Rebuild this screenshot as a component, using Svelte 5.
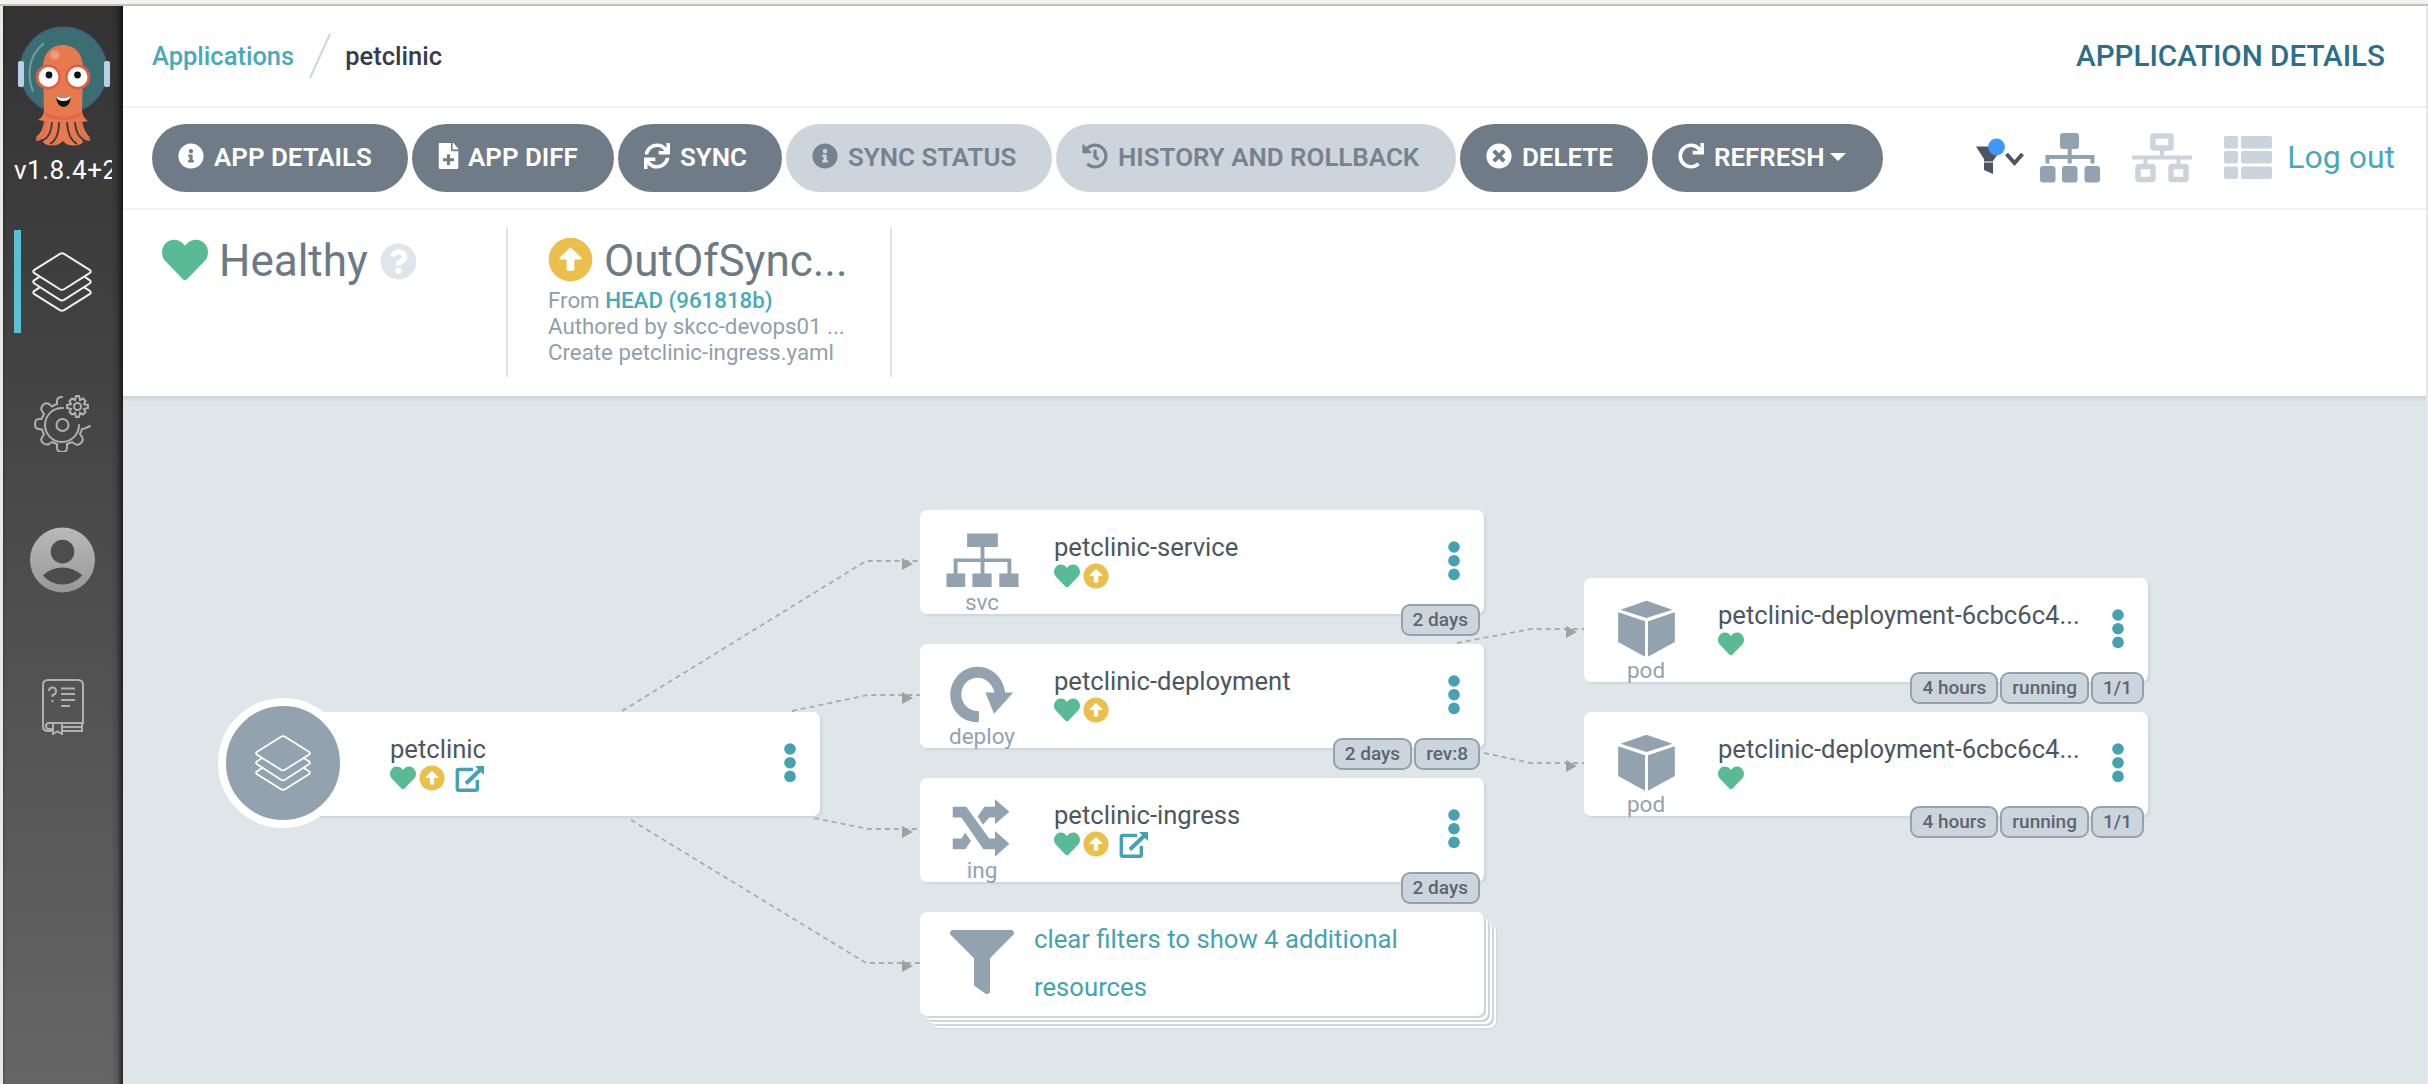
<script>
  const icons = {
    heart: 'M462.3 62.6C407.5 15.9 326 24.3 275.7 76.2L256 96.5l-19.7-20.3C186.1 24.3 104.5 15.9 49.7 62.6c-62.8 53.6-66.1 149.8-9.9 207.9l193.5 199.8c12.5 12.9 32.8 12.9 45.3 0l193.5-199.8c56.3-58.1 53-154.3-9.8-207.9z',
    up: 'M8 256C8 119 119 8 256 8s248 111 248 248-111 248-248 248S8 393 8 256zm292 116V256h70.9c10.7 0 16.1-13 8.5-20.5L264.5 121.2c-4.7-4.7-12.2-4.7-16.9 0l-115 114.3c-7.6 7.6-2.2 20.5 8.5 20.5H212v116c0 6.6 5.4 12 12 12h64c6.6 0 12-5.4 12-12z',
    info: 'M256 8C119.043 8 8 119.083 8 256c0 136.997 111.043 248 248 248s248-111.003 248-248C504 119.083 392.957 8 256 8zm0 110c23.196 0 42 18.804 42 42s-18.804 42-42 42-42-18.804-42-42 18.804-42 42-42zm56 254c0 6.627-5.373 12-12 12h-88c-6.627 0-12-5.373-12-12v-24c0-6.627 5.373-12 12-12h12v-64h-12c-6.627 0-12-5.373-12-12v-24c0-6.627 5.373-12 12-12h64c6.627 0 12 5.373 12 12v100h12c6.627 0 12 5.373 12 12v24z',
    file: 'M240 136V0H24C10.7 0 0 10.7 0 24v464c0 13.300 10.700 24 24 24h336c13.300 0 24-10.700 24-24V160H264c-13.200 0-24-10.800-24-24zm60 172v40c0 6-5 10-10 10h-68v68c0 6-5 10-10 10h-40c-6 0-10-5-10-10v-68H94c-6 0-10-5-10-10v-40c0-6 5-10 10-10h68v-68c0-6 5-10 10-10h40c6 0 10 5 10 10v68h68c6 0 10 5 10 10zM384 122v6H272V0h6c6 0 12 3 17 7l82 98c4 4 7 10 7 17z',
    sync: 'M440.65 12.57l4 82.77A247.16 247.16 0 0 0 255.83 8C134.73 8 33.91 94.92 12.29 209.82A12 12 0 0 0 24.09 224h49.05a12 12 0 0 0 11.67-9.26 175.91 175.91 0 0 1 317-56.94l-101.46-4.86a12 12 0 0 0-12.57 12v47.41a12 12 0 0 0 12 12H500a12 12 0 0 0 12-12V12a12 12 0 0 0-12-12h-47.37a12 12 0 0 0-11.98 12.57zM255.83 432a175.61 175.61 0 0 1-146-77.8l101.8 4.87a12 12 0 0 0 12.57-12v-47.4a12 12 0 0 0-12-12H12a12 12 0 0 0-12 12V500a12 12 0 0 0 12 12h47.35a12 12 0 0 0 12-12.6l-4.15-82.57A247.17 247.17 0 0 0 255.83 504c121.11 0 221.93-86.92 243.55-201.82a12 12 0 0 0-11.8-14.18h-49.05a12 12 0 0 0-11.67 9.26A175.86 175.86 0 0 1 255.83 432z',
    history: 'M504 255.531c.253 136.64-111.18 248.372-247.82 248.468-59.015.042-113.223-20.53-155.822-54.911-11.077-8.94-11.905-25.541-1.839-35.607l11.267-11.267c8.609-8.609 22.353-9.551 31.891-1.984C173.062 425.135 212.781 440 256 440c101.705 0 184-82.311 184-184 0-101.705-82.311-184-184-184-48.814 0-93.149 18.969-126.068 49.932l50.754 50.754c10.08 10.08 2.941 27.314-11.313 27.314H24c-8.837 0-16-7.163-16-16V38.627c0-14.254 17.234-21.393 27.314-11.314l49.372 49.372C129.209 34.136 189.552 8 256 8c136.81 0 247.747 110.78 248 247.531zm-180.912 78.784l9.823-12.63c8.138-10.463 6.253-25.542-4.21-33.679L288 256.349V152c0-13.255-10.745-24-24-24h-16c-13.255 0-24 10.745-24 24v135.651l65.409 50.874c10.463 8.137 25.541 6.253 33.679-4.21z',
    times: 'M256 8C119 8 8 119 8 256s111 248 248 248 248-111 248-248S393 8 256 8zm121.6 313.1c4.7 4.7 4.7 12.3 0 17L338 377.6c-4.7 4.7-12.3 4.7-17 0L256 312l-65.1 65.6c-4.7 4.7-12.3 4.7-17 0L134.4 338c-4.7-4.7-4.7-12.3 0-17l65.6-65-65.6-65.1c-4.7-4.7-4.7-12.3 0-17l39.6-39.6c4.7-4.7 12.3-4.7 17 0l65 65.7 65.1-65.6c4.7-4.7 12.3-4.7 17 0l39.6 39.6c4.7 4.7 4.7 12.3 0 17L312 256l65.6 65.1z',
    redo: 'M500.33 0h-47.41a12 12 0 0 0-12 12.57l4 82.76A247.42 247.42 0 0 0 256 8C119.34 8 7.9 119.53 8 256.19 8.1 393.07 119.1 504 256 504a247.1 247.1 0 0 0 166.18-63.91 12 12 0 0 0 .48-17.43l-34-34a12 12 0 0 0-16.38-.55A176 176 0 1 1 402.1 157.8l-101.53-4.87a12 12 0 0 0-12.57 12v47.41a12 12 0 0 0 12 12h200.33a12 12 0 0 0 12-12V12a12 12 0 0 0-12-12z',
    question: 'M504 256c0 136.997-111.043 248-248 248S8 392.997 8 256C8 119.083 119.043 8 256 8s248 111.083 248 248zM262.655 90c-54.497 0-89.255 22.957-116.549 63.758-3.536 5.286-2.353 12.415 2.715 16.258l34.699 26.31c5.205 3.947 12.621 3.008 16.665-2.122 17.864-22.658 30.113-35.797 57.303-35.797 20.429 0 45.698 13.148 45.698 32.958 0 14.976-12.363 22.667-32.534 33.976C247.128 238.528 216 254.941 216 296v4c0 6.627 5.373 12 12 12h56c6.627 0 12-5.373 12-12v-1.333c0-28.462 83.186-29.647 83.186-106.667 0-58.002-60.165-102-116.531-102zM256 338c-25.365 0-46 20.635-46 46 0 25.364 20.635 46 46 46s46-20.636 46-46c0-25.364-20.635-46-46-46z',
    filter: 'M487.976 0H24.028C2.71 0-8.047 25.866 7.058 40.971L192 225.941V432c0 7.831 3.821 15.17 10.237 19.662l80 55.98C298.02 518.69 320 507.493 320 487.98V225.941l184.947-184.97C520.021 25.896 509.338 0 487.976 0z'
  };

  const actions = [
    { id: 'details', icon: 'info', label: 'APP DETAILS' },
    { id: 'diff', icon: 'file', label: 'APP DIFF' },
    { id: 'sync', icon: 'sync', label: 'SYNC' },
    { id: 'status', icon: 'info', label: 'SYNC STATUS', off: true },
    { id: 'history', icon: 'history', label: 'HISTORY AND ROLLBACK', off: true },
    { id: 'delete', icon: 'times', label: 'DELETE' },
    { id: 'refresh', icon: 'redo', label: 'REFRESH', caret: true }
  ];

  const nodes = [
    { x: 920, y: 510, kind: 'svc', name: 'petclinic-service', sync: true, tags: ['2 days'] },
    { x: 920, y: 644, kind: 'deploy', name: 'petclinic-deployment', sync: true, tags: ['2 days', 'rev:8'] },
    { x: 920, y: 778, kind: 'ing', name: 'petclinic-ingress', sync: true, link: true, tags: ['2 days'] },
    { x: 1584, y: 578, kind: 'pod', name: 'petclinic-deployment-6cbc6c4...', tags: ['4 hours', 'running', '1/1'] },
    { x: 1584, y: 712, kind: 'pod', name: 'petclinic-deployment-6cbc6c4...', tags: ['4 hours', 'running', '1/1'] }
  ];

  const edges = [
    'M622 711 L866 561 H920',
    'M792 711 L868 695 H920',
    'M814 818 L868 829 H920',
    'M631 820 L866 963 H920',
    'M1457 643 L1531 629 H1584',
    'M1484 753 L1531 763 H1584'
  ];
  const arrows = [[902, 564], [902, 698], [902, 832], [902, 966], [1566, 632], [1566, 766]];
</script>

{#snippet glyph(name, cls, box = '0 0 512 512')}
  <svg class={cls} viewBox={box} aria-hidden="true"><path d={icons[name]} fill="currentColor" /></svg>
{/snippet}

{#snippet layers(cls)}
  <svg class={cls} viewBox="0 0 64 64" fill="none" stroke="currentColor" stroke-width="2" stroke-linejoin="round" aria-hidden="true">
    <path d="M29.800 3 3.500 19.500q-2.500 1.700 0 3.400L29.800 39.500q2.200 1.200 4.400 0L60.500 22.900q2.500-1.700 0-3.400L34.200 3q-2.200-1.200-4.400 0z" />
    <path d="M9 26.500l-5.500 3.600q-2.500 1.700 0 3.400L29.800 50.500q2.200 1.200 4.400 0L60.500 33.500q2.500-1.700 0-3.400L55 26.500" />
    <path d="M9 37.500l-5.500 3.600q-2.500 1.700 0 3.400L29.800 61q2.200 1.200 4.400 0L60.500 44.500q2.500-1.700 0-3.400L55 37.500" />
  </svg>
{/snippet}

{#snippet external()}
  <svg class="ext" viewBox="0 0 30 28" fill="none" stroke="currentColor" aria-hidden="true">
    <path d="M18 4.500H3.800a1.500 1.500 0 0 0-1.500 1.500v17.700a1.500 1.500 0 0 0 1.500 1.500h17a1.500 1.500 0 0 0 1.500-1.500V15" stroke-width="3.400" />
    <path d="M11 18.500 25 5" stroke-width="4" />
    <path d="M20 1H29v9z" fill="currentColor" stroke="none" />
  </svg>
{/snippet}

{#snippet dots()}
  <svg class="dots" viewBox="0 0 12 40" fill="currentColor" aria-hidden="true">
    <circle cx="6" cy="6" r="5.800" /><circle cx="6" cy="19.700" r="5.800" /><circle cx="6" cy="33.400" r="5.800" />
  </svg>
{/snippet}

{#snippet kindIcon(kind)}
  <svg class="kind" viewBox="0 0 76 60" fill="currentColor" aria-hidden="true">
    {#if kind === 'svc'}
      <path d="M22 2.500h32v14H40v12h28V44h7.500v14h-20V44H64V32H40v12h7.500v14h-20V44H36V32H12v12h8v14H.5V44H8V28.500h28v-12H22z" />
    {:else if kind === 'deploy'}
      <path d="M34 59.500C16 59.500 4.500 46.500 4.500 31 4.500 14 18 1.500 32.500 1.500 48 1.500 60 13 61.500 28.500H70L50 50.500 41 28.500h9.500C48.500 19.500 41.500 13 33 13c-9.500 0-17 7.500-17 17.500S24 48 34.500 48z" />
    {:else if kind === 'ing'}
      <path d="M7 8h14l24 33h6v-8l15 13.500L51 60v-8H39L16 19H7zM51 0l15 13L51 26v-7h-6l-6.500 7.500-5.500-8.500L40 8h11zM7 41h9l4-6 6 8.500-6 8.500H7z" />
    {:else}
      <path d="M38 1.500 65 11 38 19.500 11 11zM8.500 13.500l28 9.500v37l-28-15.500zM67.500 13.500l-28 9.500v37l28-15.500z" />
    {/if}
  </svg>
{/snippet}

<div class="window">
  <nav class="side">
    <svg class="argo" viewBox="0 0 92 122" aria-hidden="true">
      <circle cx="45.500" cy="44.500" r="43" fill="#3b6e72" stroke="#44617f" stroke-width="2" />
      <rect x="0" y="35" width="6" height="26" rx="2" fill="#b9cfe6" />
      <rect x="86" y="35" width="6" height="26" rx="2" fill="#b9cfe6" />
      <path d="M26 17C12 29 8 46 15 66" fill="none" stroke="#6f9d9d" stroke-width="2" />
      <path d="M25 45C24 28 33 19 45 19s21 9 20 26L64 84q0 7 6 11l-6 1q3 12 8 15l-8 3q3 3-4 5-10 2-15-4-6 6-15 4-7-2-4-5l-8-3q7-5 8-16l-6-1q6-3 6-10z" fill="#e6794e" />
      <path d="M27 86q18 10 36 0v4q-18 8-36 0z" fill="#dc6a47" />
      <path d="M34 96q-1 16-11 19M41 96q0 17-9 22M49 96q1 17 10 22M57 96q1 15 10 18" fill="none" stroke="#3a3a3a" stroke-width="1.800" />
      <path d="M18 113q9 2 10-18M72 113q-9 2-10-18" fill="none" stroke="#e0704a" stroke-width="3" />
      <circle cx="37" cy="29" r="4.500" fill="#ef9a7c" />
      <circle cx="30" cy="51" r="12.500" fill="#dc5c45" /><circle cx="60" cy="51" r="12.500" fill="#dc5c45" />
      <circle cx="30.500" cy="51" r="10" fill="#fff" /><circle cx="59.500" cy="51" r="10" fill="#fff" />
      <circle cx="31" cy="49" r="3.400" fill="#111" /><circle cx="59.500" cy="49" r="3.400" fill="#111" />
      <path d="M38 70q7 4 15 0-1 11-7.500 11T38 70z" fill="#111" /><path d="M38 70q7 4 15 0-1 5-7.500 5T38 70z" fill="#fff" />
    </svg>
    <div class="version">v1.8.4+2</div>
    <div class="apps">{@render layers('stack')}</div>
    <svg class="gear" viewBox="0 0 58 58" fill="none" stroke="currentColor" stroke-width="2" stroke-linecap="round" aria-hidden="true">
      <path d="M28 2q-5 0-5 4v3q-3 1-5 2.500l-3-2.500q-3-2-6 1t-1 6l2 3-2.500 5H5q-4 0-4 5t4 5l3 .5q1 3 2 5l-2 3q-2 3 1 5.500t6 1l3-2 5 2v4q0 4 5 4t5-4v-4l5-2 3 2q3 2 6-1t1-6l-2-3q1-2 2-5l4-1 4-2" transform="translate(0 1)" />
      <path d="M29 14a17 17 0 1 0 16 17" /><circle cx="28.500" cy="31" r="6" />
      <path d="M42 2h3l1 4 3-1.500 2.500 2.500-1.500 3 4 1v3l-4 1 1.500 3-2.500 2.500-3-1.500-1 4h-3l-1-4-3 1.500-2.500-2.500 1.500-3-4-1v-3l4-1-1.500-3L38 4.500 41 6z" /><circle cx="43.500" cy="12.500" r="3.500" />
    </svg>
    <svg class="user" viewBox="0 0 66 66" aria-hidden="true">
      <defs><linearGradient id="userFill" x2="0" y2="1"><stop offset="0" stop-color="#b9b9b9" /><stop offset="1" stop-color="#989898" /></linearGradient></defs>
      <circle cx="33" cy="33" r="33" fill="url(#userFill)" /><circle cx="33" cy="24.500" r="12" fill="#4d4d4d" />
      <path d="M13 48.500Q22 40.500 33 40.500T53 48.500Q45 58 33 58T13 48.500z" fill="#4d4d4d" />
    </svg>
    <svg class="book" viewBox="0 0 42 56" fill="none" stroke="currentColor" stroke-width="2" aria-hidden="true">
      <path d="M11 52H6q-5 0-5-5V6q0-5 5-5h30q5 0 5 5v38H7q-3 0-3 3t3 3h4M20 52h20v-8M20 48h20M11 44v11l4.500-2.500L20 55V44" />
      <path d="M7 12q0-3.500 3.500-3.500T14 12t-3.500 4v2M10.500 21v2M19 9.500h14M19 15h14M19 21h14M19 27h9" />
    </svg>
  </nav>

  <main>
    <header>
      <a class="crumb">Applications</a>
      <svg class="slash" viewBox="0 0 24 46" aria-hidden="true"><path d="M2 45 22 1" stroke="#ccd6dd" stroke-width="2" /></svg>
      <span class="here">petclinic</span>
      <span class="title">APPLICATION DETAILS</span>
    </header>

    <div class="toolbar">
      <div class="actions">
        {#each actions as a (a.id)}
          <button class="btn {a.id}" class:off={a.off}>
            {@render glyph(a.icon, 'bi', a.icon === 'file' ? '0 0 384 512' : '0 0 512 512')}
            <span>{a.label}</span>
            {#if a.caret}<i class="caret"></i>{/if}
          </button>
        {/each}
      </div>
      <div class="views">
        <svg class="flt" viewBox="0 0 50 38" aria-hidden="true">
          <path d="M0 8.500h27L17 23v13l-9-4V21z" fill="#4c5661" /><path d="M8 24h9" stroke="#fff" stroke-width="1" />
          <circle cx="20.500" cy="9" r="8.400" fill="#3f97fb" />
          <path d="M30.500 16l8 9 8-9" fill="none" stroke="#4c5661" stroke-width="4" />
        </svg>
        <svg class="tree" viewBox="0 0 60 52" fill="currentColor" aria-hidden="true">
          <rect x="20" y="1" width="19" height="16" rx="3" /><rect x="0" y="34" width="15.500" height="16.500" rx="3" /><rect x="22" y="34" width="15.500" height="16.500" rx="3" /><rect x="44.500" y="34" width="15.500" height="16.500" rx="3" />
          <path d="M7.500 31.500v-6.500h45v6.500M29.700 14v17.500" fill="none" stroke="currentColor" stroke-width="4" />
        </svg>
        <svg class="net" viewBox="0 0 60 52" fill="none" stroke="currentColor" aria-hidden="true">
          <rect x="21" y="4" width="18" height="12" rx="1" stroke-width="5.500" /><rect x="6" y="34.500" width="15" height="13" rx="1" stroke-width="5.500" /><rect x="39" y="34.500" width="15" height="13" rx="1" stroke-width="5.500" />
          <path d="M0 25.500h60M30 17v9M13.500 25.500v8M46.500 25.500v8" stroke-width="4" />
        </svg>
        <svg class="list" viewBox="0 0 48 46" fill="currentColor" aria-hidden="true">
          <rect y="1" width="14" height="12.500" rx="2" /><rect x="17" y="1" width="31" height="12.500" rx="2" /><rect y="16" width="14" height="12.500" rx="2" /><rect x="17" y="16" width="31" height="12.500" rx="2" /><rect y="31.500" width="14" height="12.500" rx="2" /><rect x="17" y="31.500" width="31" height="12.500" rx="2" />
        </svg>
        <a class="logout">Log out</a>
      </div>
    </div>

    <section class="summary">
      <div class="cell health">
        {@render glyph('heart', 'bigheart')}<span class="state">Healthy</span>{@render glyph('question', 'help')}
      </div>
      <div class="cell syncs">
        <div class="line">{@render glyph('up', 'bigup')}<span class="state">OutOfSync...</span></div>
        <p>From <a>HEAD (961818b)</a></p>
        <p>Authored by skcc-devops01 ...</p>
        <p>Create petclinic-ingress.yaml</p>
      </div>
    </section>

    <section class="canvas"></section>
  </main>

  <div class="graph">
    <svg class="edges" viewBox="0 0 2428 1084" aria-hidden="true">
      {#each edges as d}<path {d} />{/each}
      {#each arrows as [ax, ay]}<polygon points="{ax},{ay - 6} {ax + 11},{ay} {ax},{ay + 6}" />{/each}
    </svg>

    <article class="node root">
      <div class="disc">{@render layers('rootstack')}</div>
      <div class="body"><span class="name">petclinic</span>
        <div class="marks">{@render glyph('heart', 'heart')}{@render glyph('up', 'up')}{@render external()}</div></div>
      {@render dots()}
    </article>

    {#each nodes as n}
      <article class="node" style="left:{n.x}px;top:{n.y}px">
        <div class="type">{@render kindIcon(n.kind)}<span>{n.kind}</span></div>
        <div class="body"><span class="name">{n.name}</span>
          <div class="marks">{@render glyph('heart', 'heart')}{#if n.sync}{@render glyph('up', 'up')}{/if}{#if n.link}{@render external()}{/if}</div></div>
        {@render dots()}
        <div class="tags">{#each n.tags as t}<span>{t}</span>{/each}</div>
      </article>
    {/each}

    <article class="node filtered">
      {@render glyph('filter', 'funnel')}
      <a>clear filters to show 4 additional resources</a>
    </article>
  </div>
</div>

<style>
  :global(body) { background: #f3f2f1; }
  .window { position: relative; box-sizing: border-box; width: 2428px; height: 1084px; padding: 6px 2px 0 3px; display: flex; overflow: hidden; font-family: Roboto, "Liberation Sans", sans-serif; background: linear-gradient(#f3f2f1 4px, #c8c0bc 4px, #c8c0bc 6px, #e9e8e5 6px); }
  svg { display: block; flex: none; }
  .side { box-sizing: border-box; width: 120px; flex: none; display: flex; flex-direction: column; align-items: center; padding-top: 20px; color: #b0b0b0; background: linear-gradient(90deg, #0003, #0000 3px, #0000 108px, #0002 114px, #0009), linear-gradient(#333, #444 36%, #666); }
  .argo { width: 92px; height: 122px; margin-left: 2px; }
  .version { align-self: stretch; margin: 5px 11px 0; height: 34px; line-height: 34px; font-size: 26px; letter-spacing: .5px; white-space: nowrap; overflow: hidden; color: #fff; }
  .apps { box-sizing: border-box; align-self: stretch; margin: 43px 0 0 11px; height: 103px; padding: 21px 0 0 11px; border-left: 7px solid #5bc0d6; color: #f2f2f2; }
  .stack { width: 62px; height: 62px; margin-left: -1px; }
  .gear { width: 58px; height: 58px; margin-top: 61px; }
  .user { width: 65px; height: 66px; margin: 75px 1px 0 0; }
  .book { width: 42px; height: 56px; margin-top: 86px; }
  main { flex: 1; min-width: 0; display: flex; flex-direction: column; background: #fff; }
  header { box-sizing: border-box; height: 102px; padding: 0 41px 1px 29px; display: flex; align-items: center; border-bottom: 2px solid #eff3f6; font-weight: 500; font-size: 25.500px; }
  .crumb { color: #4aa9b8; }
  .slash { width: 24px; height: 46px; margin: 0 13px 0 14px; }
  .here { color: #363c4a; }
  .title { margin-left: auto; font-size: 29.600px; color: #2c6f89; }
  .toolbar { box-sizing: border-box; height: 102px; padding: 0 31px 0 29px; display: flex; align-items: center; border-bottom: 2px solid #eff3f6; }
  .actions { display: flex; gap: 4px; }
  .btn { box-sizing: border-box; height: 68px; padding: 0 0 2px 26px; border: 0; border-radius: 34px; display: flex; align-items: center; gap: 10px; background: #6f7c87; color: #fff; font: 600 25.900px Roboto, sans-serif; white-space: nowrap; }
  .bi { width: 26px; height: 26px; margin-top: -2px; }
  .diff .bi { width: 21px; margin-right: -1px; }
  .off { background: #cdd5dc; color: #76838f; }
  .details { width: 256px; } .diff { width: 202px; } .sync { width: 164px; } .status { width: 266px; } .history { width: 400px; } .delete { width: 188px; } .refresh { width: 231px; }
  .caret { margin-left: -4px; border: 8px solid transparent; border-top-color: #fff; border-bottom: 0; }
  .views { margin-left: auto; display: flex; align-items: center; }
  .flt { width: 50px; height: 38px; margin-top: -2px; }
  .tree { width: 60px; height: 52px; margin: -1px 0 0 14px; color: #92a2af; }
  .net { width: 60px; height: 52px; margin: -1px 0 0 32px; color: #cbd4dc; }
  .list { width: 48px; height: 46px; margin: -1px 0 0 32px; color: #cbd4dc; }
  .logout { margin: -3px 0 0 15px; font-size: 32px; color: #4aa9b8; }
  .summary { box-sizing: border-box; height: 186px; padding: 17px 0 0 30px; display: flex; }
  .cell { box-sizing: border-box; height: 150px; border-right: 2px solid #dee6eb; }
  .health { width: 355px; padding: 12px 0 0 9px; display: flex; align-items: flex-start; }
  .state { font-size: 44px; line-height: 44px; color: #6b7a86; white-space: nowrap; }
  .bigheart { width: 46px; height: 46px; margin: -2px 11px 0 0; color: #59bb96; }
  .help { width: 37px; height: 37px; margin: 4px 0 0 12px; color: #dee6eb; }
  .syncs { width: 384px; padding: 10px 0 0 40px; }
  .line { display: flex; gap: 11px; height: 50px; padding-top: 2px; box-sizing: border-box; }
  .bigup { width: 45px; height: 45px; color: #ebbf4b; margin-top: -2px; }
  p { margin: 0; font-size: 22.300px; line-height: 26px; color: #909fac; white-space: nowrap; }
  p a { color: #4aa9b8; font-weight: 500; }
  .canvas { flex: 1; background: linear-gradient(#c9d2d8, #dee6e9 6px); }
  .graph, .edges { position: absolute; inset: 0; }
  .edges path { fill: none; stroke: #a1adb8; stroke-width: 1.800; stroke-dasharray: 5 4; }
  .edges polygon { fill: #a0a0a0; }
  .node { position: absolute; box-sizing: border-box; width: 564px; height: 104px; border-radius: 7px; background: #fff; box-shadow: 2px 2px 2px #ccd6dd; display: flex; }
  .root { left: 256px; top: 712px; padding-left: 134px; }
  .disc { position: absolute; box-sizing: border-box; left: -38px; top: -14px; width: 130px; height: 130px; border: 8px solid #fff; border-radius: 50%; background: #92a2af; display: flex; align-items: center; justify-content: center; color: #fff; }
  .rootstack { width: 60px; height: 58px; }
  .type { width: 124px; flex: none; padding-top: 20px; display: flex; flex-direction: column; align-items: center; font-size: 22.500px; line-height: 24px; color: #92a2af; }
  .kind { width: 73px; height: 60px; }
  .node:not(.root) .body { padding-left: 10px; }
  .body { flex: 1; padding-top: 22px; }
  .name { display: block; font-size: 25.600px; line-height: 30px; color: #4c5661; white-space: nowrap; }
  .marks { display: flex; align-items: flex-start; gap: 3px; padding-top: 1px; }
  .heart { width: 26px; height: 26px; color: #59bb96; }
  .up { width: 26px; height: 26px; color: #ebbf4b; }
  .ext { width: 30px; height: 28px; margin-left: 7px; color: #45a2b2; }
  .dots { position: absolute; width: 12px; height: 40px; right: 24px; top: 31px; color: #45a2b2; }
  .tags { position: absolute; right: 4px; bottom: -22px; display: flex; gap: 2px; }
  .tags span { box-sizing: border-box; height: 32px; padding: 0 10px; border: 2px solid #92a2af; border-radius: 9px; background: #cdd5dc; font-size: 19px; font-weight: 500; line-height: 27px; color: #5a6672; }
  .filtered { left: 920px; top: 912px; box-shadow: 2px 2px 0 #ccd6dd, 4px 4px 0 #fff, 6px 6px 0 #ccd6dd, 8px 8px 0 #fff, 10px 10px 0 #ccd6dd, 12px 12px 0 #fff, 13px 13px 1px #ccd6dd; }
  .funnel { width: 64px; height: 64px; margin: 18px 20px 0 30px; color: #92a2af; }
  .filtered a { width: 400px; padding-top: 3px; font-size: 25.700px; line-height: 48px; color: #45a2b2; }
</style>
